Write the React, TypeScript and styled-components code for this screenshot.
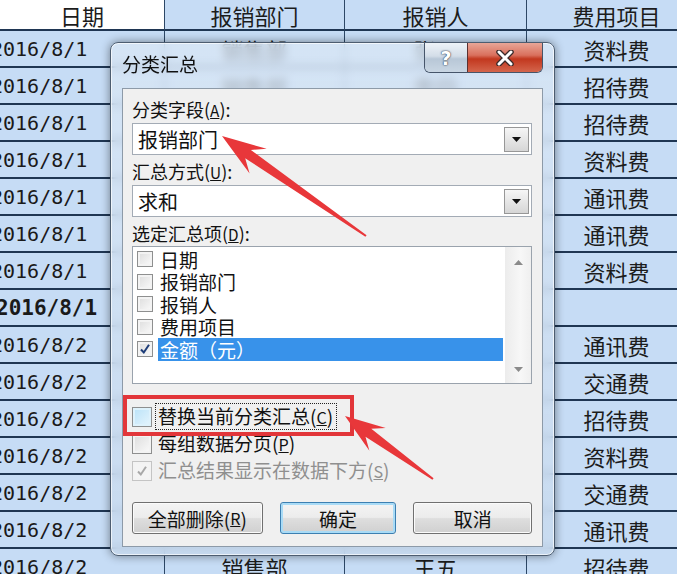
import React from "react";
import styled, { createGlobalStyle, css } from "styled-components";

const CJK = `"Noto Sans CJK SC", "Noto Sans", sans-serif`;

const GlobalStyle = createGlobalStyle`
  html, body {
    margin: 0;
    padding: 0;
    background: #c6dcf5;
  }
  * {
    box-sizing: border-box;
  }
`;

const Page = styled.div`
  position: relative;
  width: 677px;
  height: 574px;
  overflow: hidden;
  background: #c6dcf5;
  font-family: ${CJK};
`;

/* ---------- spreadsheet behind the dialog ---------- */

const Sheet = styled.div`
  display: grid;
  grid-template-columns: 165px 180px 182px 180px;
  grid-template-rows: 31px;
  grid-auto-rows: 37px;
  width: 707px;
`;

const Cell = styled.div<{ $white?: boolean; $left?: boolean }>`
  display: flex;
  align-items: center;
  justify-content: ${(p) => (p.$left ? "flex-start" : "center")};
  border-right: 1px solid #2d4766;
  border-bottom: 2px solid #1f3653;
  background: ${(p) => (p.$white ? "#ffffff" : "#c6dcf5")};
  color: #1c1c1c;
  font-size: 22px;
  line-height: normal;
  overflow: hidden;
  white-space: nowrap;
`;

const DateText = styled.span<{ $bold?: boolean }>`
  font-family: "DejaVu Sans Mono", "Liberation Mono", monospace;
  font-size: ${(p) => (p.$bold ? "21px" : "20px")};
  font-weight: ${(p) => (p.$bold ? 700 : 400)};
  margin-left: ${(p) => (p.$bold ? "-4px" : "-9px")};
  color: #1a1a1a;
`;

/* ---------- dialog ---------- */

const Dialog = styled.div`
  position: absolute;
  left: 110px;
  top: 42px;
  width: 445px;
  height: 514px;
  display: flex;
  flex-direction: column;
  padding: 0 11px 8px 11px;
  border: 1px solid #4d5d70;
  border-radius: 8px;
  background: linear-gradient(
    180deg,
    rgba(218, 231, 245, 0.72) 0%,
    rgba(200, 218, 238, 0.8) 100%
  );
  backdrop-filter: blur(4px);
  box-shadow: 0 0 10px rgba(0, 0, 0, 0.45),
    inset 0 0 0 1px rgba(255, 255, 255, 0.65);
`;

const TitleBar = styled.div`
  display: flex;
  align-items: flex-start;
  height: 45px;
`;

const Title = styled.div`
  margin-top: 9px;
  line-height: 24px;
  font-size: 19px;
  color: #111;
`;

const Controls = styled.div`
  display: flex;
  margin-left: auto;
  border: 1px solid #46556a;
  border-top: none;
  border-radius: 0 0 6px 6px;
  overflow: hidden;
`;

const CtrlButton = styled.div<{ $close?: boolean }>`
  display: flex;
  align-items: center;
  justify-content: center;
  width: ${(p) => (p.$close ? "75px" : "42px")};
  height: 29px;
  font-family: "DejaVu Sans", sans-serif;
  font-weight: 700;
  font-size: 19px;
  color: #fff;
  text-shadow: 0 0 2px #2c3a4c, 0 0 1px #2c3a4c;
  ${(p) =>
    p.$close
      ? css`
          border-left: 1px solid #5a3030;
          background: linear-gradient(
            180deg,
            #e9a697 0%,
            #d9705d 42%,
            #c2381f 55%,
            #d4654c 100%
          );
        `
      : css`
          background: linear-gradient(
            180deg,
            #eef3f8 0%,
            #d3dde8 45%,
            #b8c7d7 55%,
            #c9d6e3 100%
          );
        `}
`;

const Client = styled.div`
  flex: 1;
  display: flex;
  flex-direction: column;
  padding: 8px 10px 0 9px;
  background: #f0f0f0;
  border: 1px solid #8d9aa8;
`;

const FieldLabel = styled.div<{ $gap?: number }>`
  margin-top: ${(p) => p.$gap ?? 0}px;
  line-height: 24px;
  font-size: 18px;
  color: #111;
`;

const Combo = styled.div`
  display: flex;
  align-items: center;
  height: 32px;
  margin-top: 1px;
  padding-left: 5px;
  background: #fff;
  border: 1px solid #a3abb5;
  font-size: 20px;
  color: #111;
`;

const DropButton = styled.div`
  display: flex;
  align-items: center;
  justify-content: center;
  width: 25px;
  height: 25px;
  margin-left: auto;
  margin-right: 2px;
  border: 1px solid #979797;
  background: linear-gradient(180deg, #f6f6f6 0%, #e6e6e6 50%, #d6d6d6 100%);
`;

const ListBox = styled.div`
  display: flex;
  height: 138px;
  background: #fff;
  border: 1px solid #9aa3ad;
`;

const ListItems = styled.div`
  flex: 1;
  display: flex;
  flex-direction: column;
  padding: 1px 2px 0 4px;
`;

const ListItem = styled.div`
  display: flex;
  align-items: center;
  height: 22.5px;
`;

const ItemLabel = styled.span<{ $selected?: boolean }>`
  flex: 1;
  display: flex;
  align-items: center;
  height: 100%;
  margin-left: 5px;
  padding-left: 2px;
  font-size: 19px;
  color: ${(p) => (p.$selected ? "#fff" : "#111")};
  background: ${(p) => (p.$selected ? "#3892ea" : "transparent")};
`;

const ScrollBar = styled.div`
  display: flex;
  flex-direction: column;
  justify-content: space-between;
  align-items: center;
  width: 26px;
  padding: 13px 0 11px;
  background: linear-gradient(90deg, #ececec 0%, #f7f7f7 60%, #efefef 100%);
`;

const Box = styled.span<{
  $size: number;
  $hot?: boolean;
  $disabled?: boolean;
}>`
  display: flex;
  align-items: center;
  justify-content: center;
  flex: none;
  width: ${(p) => p.$size}px;
  height: ${(p) => p.$size}px;
  border: 1px solid ${(p) => (p.$disabled ? "#c4c4c4" : "#8e8f8f")};
  background: ${(p) =>
    p.$hot
      ? "linear-gradient(135deg, #b9e2f8 0%, #e6f5fd 100%)"
      : p.$disabled
        ? "#f4f4f4"
        : "linear-gradient(135deg, #dcdcdc 0%, #fbfbfb 100%)"};
  box-shadow: inset 0 0 0 2px ${(p) => (p.$hot ? "#def2fc" : "#f3f3f3")};
`;

const CheckRow = styled.div<{ $first?: boolean; $disabled?: boolean }>`
  display: flex;
  align-items: center;
  gap: 6px;
  height: 27px;
  margin-top: ${(p) => (p.$first ? "19px" : "0")};
  font-size: 19px;
  color: ${(p) => (p.$disabled ? "#8f8f8f" : "#111")};
`;

const CheckText = styled.span<{ $focus?: boolean }>`
  line-height: 24px;
  padding: 0 3px 0 0;
  margin-left: ${(p) => (p.$focus ? "-2px" : "0")};
  padding-left: ${(p) => (p.$focus ? "2px" : "0")};
  outline: ${(p) => (p.$focus ? "1px dotted #222" : "none")};
`;

const Key = styled.span`
  font-size: 0.85em;
  text-decoration: underline;
`;

const ButtonRow = styled.div`
  display: flex;
  gap: 17px;
  margin-top: 18px;
`;

const PushButton = styled.div<{ $w: number; $default?: boolean }>`
  display: flex;
  align-items: center;
  justify-content: center;
  width: ${(p) => p.$w}px;
  height: 32px;
  border-radius: 3px;
  font-size: 19px;
  color: #111;
  border: 1px solid ${(p) => (p.$default ? "#3c7fb1" : "#707070")};
  background: linear-gradient(
    180deg,
    #f4f4f4 0%,
    #ececec 48%,
    #dedede 52%,
    #d0d0d0 100%
  );
  box-shadow: inset 0 0 0 ${(p) => (p.$default ? "2px #a9dbf6" : "1px #fbfbfb")};
`;

/* ---------- annotations ---------- */

const RedBox = styled.div`
  position: absolute;
  left: 123px;
  top: 395px;
  width: 231px;
  height: 41px;
  border: 4px solid #e2363a;
  pointer-events: none;
`;

const Overlay = styled.svg`
  position: absolute;
  left: 0;
  top: 0;
  pointer-events: none;
`;

type Pt = [number, number];

function arrowPoints(
  tail: Pt,
  tip: Pt,
  headLen: number,
  headHalf: number,
  neckHalf: number,
  tailHalf: number
): string {
  const dx = tip[0] - tail[0];
  const dy = tip[1] - tail[1];
  const len = Math.hypot(dx, dy);
  const ux = dx / len;
  const uy = dy / len;
  const nx = -uy;
  const ny = ux;
  const neck: Pt = [tip[0] - ux * headLen * 0.72, tip[1] - uy * headLen * 0.72];
  const barb: Pt = [tip[0] - ux * headLen, tip[1] - uy * headLen];
  const pts: Pt[] = [
    [tail[0] + nx * tailHalf, tail[1] + ny * tailHalf],
    [neck[0] + nx * neckHalf, neck[1] + ny * neckHalf],
    [barb[0] + nx * headHalf, barb[1] + ny * headHalf],
    tip,
    [barb[0] - nx * headHalf, barb[1] - ny * headHalf],
    [neck[0] - nx * neckHalf, neck[1] - ny * neckHalf],
    [tail[0] - nx * tailHalf, tail[1] - ny * tailHalf],
  ];
  return pts.map((p) => `${p[0].toFixed(1)},${p[1].toFixed(1)}`).join(" ");
}

/* ---------- data ---------- */

const header = ["日期", "报销部门", "报销人", "费用项目"];

const rows: { date: string; dept: string; who: string; item: string; bold?: boolean }[] = [
  { date: "2016/8/1", dept: "销售部", who: "张三", item: "资料费" },
  { date: "2016/8/1", dept: "销售部", who: "李四", item: "招待费" },
  { date: "2016/8/1", dept: "销售部", who: "张三", item: "招待费" },
  { date: "2016/8/1", dept: "销售部", who: "王五", item: "资料费" },
  { date: "2016/8/1", dept: "销售部", who: "李四", item: "通讯费" },
  { date: "2016/8/1", dept: "销售部", who: "张三", item: "通讯费" },
  { date: "2016/8/1", dept: "销售部", who: "王五", item: "资料费" },
  { date: "2016/8/1", dept: "", who: "", item: "", bold: true },
  { date: "2016/8/2", dept: "销售部", who: "张三", item: "通讯费" },
  { date: "2016/8/2", dept: "销售部", who: "李四", item: "交通费" },
  { date: "2016/8/2", dept: "销售部", who: "张三", item: "招待费" },
  { date: "2016/8/2", dept: "销售部", who: "李四", item: "资料费" },
  { date: "2016/8/2", dept: "销售部", who: "王五", item: "交通费" },
  { date: "2016/8/2", dept: "销售部", who: "张三", item: "通讯费" },
  { date: "2016/8/2", dept: "销售部", who: "王五", item: "招待费" },
];

const fields = [
  { label: "日期", checked: false },
  { label: "报销部门", checked: false },
  { label: "报销人", checked: false },
  { label: "费用项目", checked: false },
  { label: "金额（元）", checked: true },
];

const Tick = ({ color }: { color: string }) => (
  <svg width="12" height="12" viewBox="0 0 12 12">
    <path d="M2 6.5 L4.8 9.5 L10 1.8" fill="none" stroke={color} strokeWidth="2" />
  </svg>
);

const Triangle = ({ up, color }: { up?: boolean; color: string }) => (
  <svg width="9" height="5" viewBox="0 0 9 5">
    <path d={up ? "M0 5 L4.5 0 L9 5 Z" : "M0 0 L9 0 L4.5 5 Z"} fill={color} />
  </svg>
);

export default function App() {
  return (
    <Page>
      <GlobalStyle />
      <Sheet>
        {header.map((h, i) => (
          <Cell key={h} $white={i === 0}>
            {h}
          </Cell>
        ))}
        {rows.map((r, i) => (
          <React.Fragment key={i}>
            <Cell $left>
              <DateText $bold={r.bold}>{r.date}</DateText>
            </Cell>
            <Cell>{r.dept}</Cell>
            <Cell>{r.who}</Cell>
            <Cell>{r.item}</Cell>
          </React.Fragment>
        ))}
      </Sheet>

      <Dialog>
        <TitleBar>
          <Title>分类汇总</Title>
          <Controls>
            <CtrlButton>?</CtrlButton>
            <CtrlButton $close>
              <svg width="18" height="16" viewBox="0 0 18 16">
                <path d="M3 2 L15 14 M15 2 L3 14" stroke="#3a2a2a" strokeWidth="5.5" strokeLinecap="round" />
                <path d="M3 2 L15 14 M15 2 L3 14" stroke="#ffffff" strokeWidth="3" strokeLinecap="round" />
              </svg>
            </CtrlButton>
          </Controls>
        </TitleBar>

        <Client>
          <FieldLabel>
            分类字段(<Key>A</Key>):
          </FieldLabel>
          <Combo>
            报销部门
            <DropButton>
              <Triangle color="#111" />
            </DropButton>
          </Combo>

          <FieldLabel $gap={4}>
            汇总方式(<Key>U</Key>):
          </FieldLabel>
          <Combo>
            求和
            <DropButton>
              <Triangle color="#111" />
            </DropButton>
          </Combo>

          <FieldLabel $gap={4}>
            选定汇总项(<Key>D</Key>):
          </FieldLabel>
          <ListBox>
            <ListItems>
              {fields.map((f) => (
                <ListItem key={f.label}>
                  <Box $size={16}>{f.checked && <Tick color="#1d3c78" />}</Box>
                  <ItemLabel $selected={f.checked}>{f.label}</ItemLabel>
                </ListItem>
              ))}
            </ListItems>
            <ScrollBar>
              <Triangle up color="#8a8a8a" />
              <Triangle color="#8a8a8a" />
            </ScrollBar>
          </ListBox>

          <CheckRow $first>
            <Box $size={20} $hot />
            <CheckText $focus>
              替换当前分类汇总(<Key>C</Key>)
            </CheckText>
          </CheckRow>
          <CheckRow>
            <Box $size={20} />
            <CheckText>
              每组数据分页(<Key>P</Key>)
            </CheckText>
          </CheckRow>
          <CheckRow $disabled>
            <Box $size={20} $disabled>
              <Tick color="#a8a8a8" />
            </Box>
            <CheckText>
              汇总结果显示在数据下方(<Key>S</Key>)
            </CheckText>
          </CheckRow>

          <ButtonRow>
            <PushButton $w={131}>
              全部删除(<Key>R</Key>)
            </PushButton>
            <PushButton $w={117} $default>
              确定
            </PushButton>
            <PushButton $w={119}>取消</PushButton>
          </ButtonRow>
        </Client>
      </Dialog>

      <RedBox />
      <Overlay width="677" height="574" viewBox="0 0 677 574">
        <polygon
          points={arrowPoints([366, 236], [222, 136], 44, 15, 5, 1)}
          fill="#e8373a"
        />
        <polygon
          points={arrowPoints([433, 479], [345, 416], 40, 14, 5, 1)}
          fill="#e8373a"
        />
      </Overlay>
    </Page>
  );
}
